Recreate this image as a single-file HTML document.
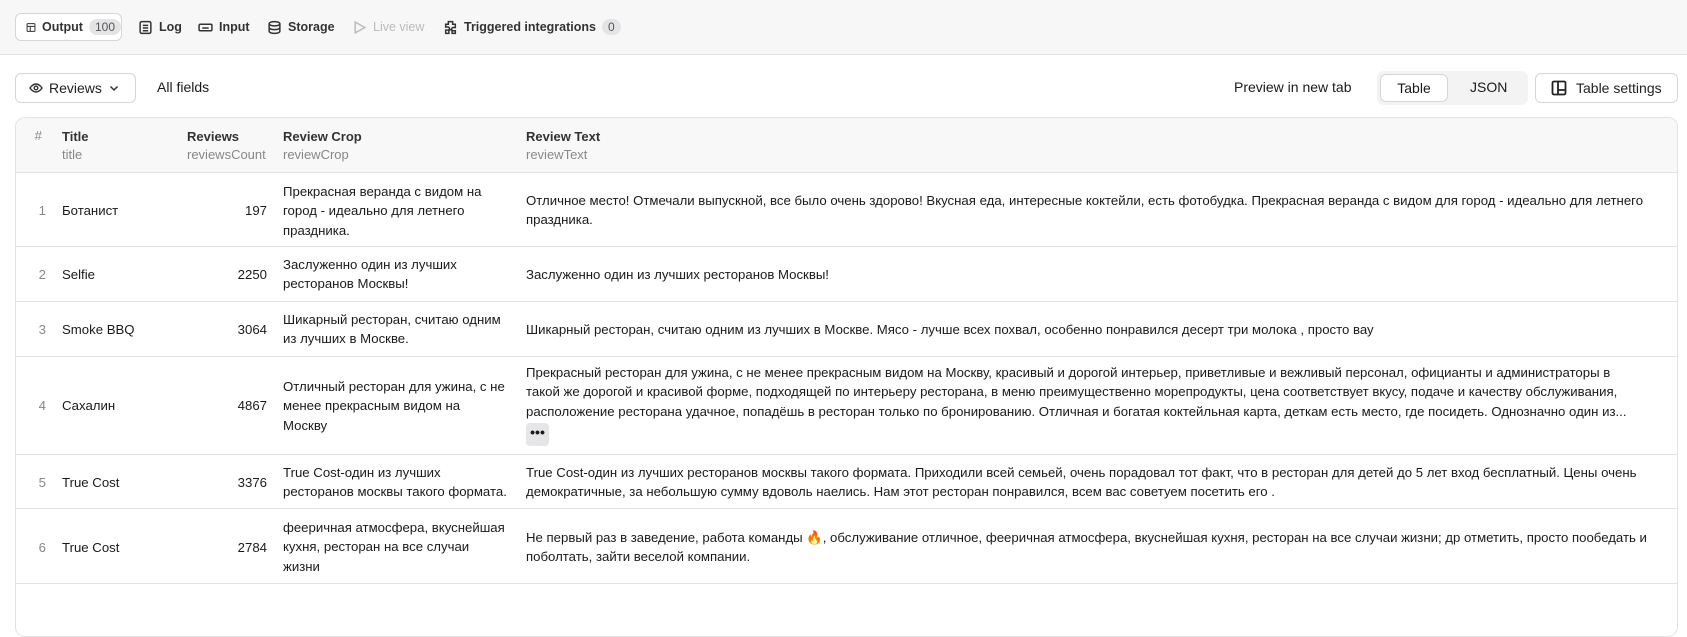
<!DOCTYPE html>
<html><head><meta charset="utf-8"><style>
*{box-sizing:border-box;margin:0;padding:0}
body{width:1687px;height:592px;overflow:hidden;background:#fff;font-family:"Liberation Sans","Noto Sans CJK SC",sans-serif;color:#1a1a1a;font-size:13px;position:relative}
.top{position:absolute;left:0;top:0;width:1687px;height:55px;background:#f7f7f8;border-bottom:1px solid #e3e3e3}
.tab{position:absolute;top:13px;height:28px;display:flex;align-items:center;gap:6px;font-size:12.5px;font-weight:bold;color:#333}
.tab svg{width:15px;height:15px;stroke:#333;fill:none;stroke-width:1.4}
.badge{background:#e4e4e6;border-radius:9px;padding:1px 6px;font-weight:normal;font-size:12px;color:#555}
.btn{position:absolute;border:1px solid #d6d6d8;border-radius:6px;background:#fff;display:flex;align-items:center;font-size:14px;color:#222}
.tbl{position:absolute;left:15px;top:117px;width:1663px;height:520px;border:1px solid #e3e3e3;border-radius:10px;overflow:hidden}
.hdr{position:absolute;left:0;top:0;width:100%;height:55px;background:#f8f8f8;border-bottom:1px solid #e3e3e3}
.row{position:absolute;left:0;width:100%;border-bottom:1px solid #e3e3e3}
.c{position:absolute;line-height:19.4px;font-size:13.2px}
.num{color:#888;left:0;width:30px;text-align:right}
.h1{font-weight:bold;font-size:13px;color:#333}
.h2{color:#888;font-size:13px}
.cr{left:267px;width:231px}
</style></head><body>
<div class="top">
<div class="tab" style="left:15px;width:107px;background:#fff;border:1px solid #d6d6d8;border-radius:6px;padding-left:10px"><svg viewBox="0 0 14 14"><rect x="1.5" y="1.5" width="11" height="11" rx="1"/><path d="M1.5 5.5h11M6 5.5v7"/></svg>Output <span class="badge">100</span></div>
<div class="tab" style="left:138px"><svg viewBox="0 0 14 14"><rect x="2" y="1.5" width="10" height="11" rx="1.5"/><path d="M4.5 5h5M4.5 7.5h5M4.5 10h5"/></svg>Log</div>
<div class="tab" style="left:198px"><svg viewBox="0 0 14 14"><rect x="1" y="4" width="12" height="6" rx="1"/><path d="M4 7.5h6"/></svg>Input</div>
<div class="tab" style="left:267px"><svg viewBox="0 0 14 14"><ellipse cx="7" cy="3.5" rx="5" ry="2"/><path d="M2 3.5v7c0 1.1 2.2 2 5 2s5-.9 5-2v-7M2 7c0 1.1 2.2 2 5 2s5-.9 5-2"/></svg>Storage</div>
<div class="tab" style="left:352px;color:#bbb;font-weight:normal"><svg viewBox="0 0 14 14" style="stroke:#bbb"><path d="M3 2l9 5-9 5z"/></svg>Live view</div>
<div class="tab" style="left:443px"><svg viewBox="0 0 14 14"><path d="M5 1.5h4v2.5h2.5v3h-2a1.5 1.5 0 000 3h2v2.5H8.5v-2a1.5 1.5 0 00-3 0v2H2.5V9.5h2a1.5 1.5 0 000-3h-2V4H5z"/></svg>Triggered integrations <span class="badge">0</span></div>
</div>
<div class="btn" style="left:15px;top:73px;width:121px;height:30px;padding-left:13px;gap:6px"><svg width="14" height="14" viewBox="0 0 14 14" fill="none" stroke="#333" stroke-width="1.4"><path d="M1 7s2.5-4 6-4 6 4 6 4-2.5 4-6 4-6-4-6-4z"/><circle cx="7" cy="7" r="1.8"/></svg>Reviews <svg width="12" height="12" viewBox="0 0 12 12" fill="none" stroke="#333" stroke-width="1.5"><path d="M2.5 4.5L6 8l3.5-3.5"/></svg></div>
<div style="position:absolute;left:157px;top:79px;font-size:14px">All fields</div>
<div style="position:absolute;left:1234px;top:79px;font-size:14px">Preview in new tab</div>
<div style="position:absolute;left:1377px;top:71px;width:151px;height:34px;background:#f3f3f4;border-radius:7px"></div>
<div style="position:absolute;left:1380px;top:74px;width:68px;height:28px;background:#fff;border:1px solid #d6d6d8;border-radius:6px;font-size:14px;text-align:center;line-height:26px">Table</div>
<div style="position:absolute;left:1470px;top:79px;font-size:14px">JSON</div>
<div class="btn" style="left:1535px;top:73px;width:143px;height:30px;padding-left:15px;gap:9px"><svg width="16" height="16" viewBox="0 0 16 16" fill="none" stroke="#222" stroke-width="1.8"><rect x="1.5" y="1.5" width="13" height="13" rx="1.5"/><path d="M7 1.5v13M7 10h7.5"/></svg>Table settings</div>

<div class="tbl">
<div class="hdr">
<div class="c num" style="top:8px;width:26px">#</div>
<div class="c h1" style="left:46px;top:9px">Title</div><div class="c h2" style="left:46px;top:27px">title</div>
<div class="c h1" style="left:171px;top:9px">Reviews</div><div class="c h2" style="left:171px;top:27px">reviewsCount</div>
<div class="c h1" style="left:267px;top:9px">Review Crop</div><div class="c h2" style="left:267px;top:27px">reviewCrop</div>
<div class="c h1" style="left:510px;top:9px">Review Text</div><div class="c h2" style="left:510px;top:27px">reviewText</div>
</div>
<div class="row" style="top:55px;height:74px"></div>
<div class="c num" style="top:83px">1</div><div class="c" style="left:46px;top:83px">Ботанист</div><div class="c" style="left:160px;width:91px;text-align:right;top:83px">197</div>
<div class="c cr" style="top:64px">Прекрасная веранда с видом на город - идеально для летнего праздника.</div>
<div class="c" style="left:510px;width:1130px;top:73px">Отличное место! Отмечали выпускной, все было очень здорово! Вкусная еда, интересные коктейли, есть фотобудка. Прекрасная веранда с видом для город - идеально для летнего праздника.</div>
<div class="row" style="top:129px;height:55px"></div>
<div class="c num" style="top:147px">2</div><div class="c" style="left:46px;top:147px">Selfie</div><div class="c" style="left:160px;width:91px;text-align:right;top:147px">2250</div>
<div class="c cr" style="top:137px">Заслуженно один из лучших ресторанов Москвы!</div>
<div class="c" style="left:510px;top:147px">Заслуженно один из лучших ресторанов Москвы!</div>
<div class="row" style="top:184px;height:55px"></div>
<div class="c num" style="top:202px">3</div><div class="c" style="left:46px;top:202px">Smoke BBQ</div><div class="c" style="left:160px;width:91px;text-align:right;top:202px">3064</div>
<div class="c cr" style="top:192px">Шикарный ресторан, считаю одним из лучших в Москве.</div>
<div class="c" style="left:510px;top:202px">Шикарный ресторан, считаю одним из лучших в Москве. Мясо - лучше всех похвал, особенно понравился десерт три молока , просто вау</div>
<div class="row" style="top:239px;height:98px"></div>
<div class="c num" style="top:278px">4</div><div class="c" style="left:46px;top:278px">Сахалин</div><div class="c" style="left:160px;width:91px;text-align:right;top:278px">4867</div>
<div class="c cr" style="top:259px">Отличный ресторан для ужина, с не<br>менее прекрасным видом на<br>Москву</div>
<div class="c" style="left:510px;width:1128px;top:245px;height:58px;overflow:hidden">Прекрасный ресторан для ужина, с не менее прекрасным видом на Москву, красивый и дорогой интерьер, приветливые и вежливый персонал, официанты и администраторы в<br>такой же дорогой и красивой форме, подходящей по интерьеру ресторана, в меню преимущественно морепродукты, цена соответствует вкусу, подаче и качеству обслуживания,<br>расположение ресторана удачное, попадёшь в ресторан только по бронированию. Отличная и богатая коктейльная карта, деткам есть место, где посидеть. Однозначно один из...</div>
<div style="position:absolute;left:510px;top:305px;width:23px;height:23px;background:#e6e6e8;border-radius:4px;text-align:center;line-height:18px;font-weight:bold;font-size:14px">•••</div>
<div class="row" style="top:337px;height:54px"></div>
<div class="c num" style="top:355px">5</div><div class="c" style="left:46px;top:355px">True Cost</div><div class="c" style="left:160px;width:91px;text-align:right;top:355px">3376</div>
<div class="c cr" style="top:345px">True Cost-один из лучших ресторанов москвы такого формата.</div>
<div class="c" style="left:510px;width:1128px;top:345px">True Cost-один из лучших ресторанов москвы такого формата. Приходили всей семьей, очень порадовал тот факт, что в ресторан для детей до 5 лет вход бесплатный. Цены очень демократичные, за небольшую сумму вдоволь наелись. Нам этот ресторан понравился, всем вас советуем посетить его .</div>
<div class="row" style="top:391px;height:75px"></div>
<div class="c num" style="top:420px">6</div><div class="c" style="left:46px;top:420px">True Cost</div><div class="c" style="left:160px;width:91px;text-align:right;top:420px">2784</div>
<div class="c cr" style="top:400px">фееричная атмосфера, вкуснейшая<br>кухня, ресторан на все случаи<br>жизни</div>
<div class="c" style="left:510px;width:1128px;top:410px">Не первый раз в заведение, работа команды 🔥, обслуживание отличное, фееричная атмосфера, вкуснейшая кухня, ресторан на все случаи жизни; др отметить, просто пообедать и<br>поболтать, зайти веселой компании.</div>
</div>
</body></html>
